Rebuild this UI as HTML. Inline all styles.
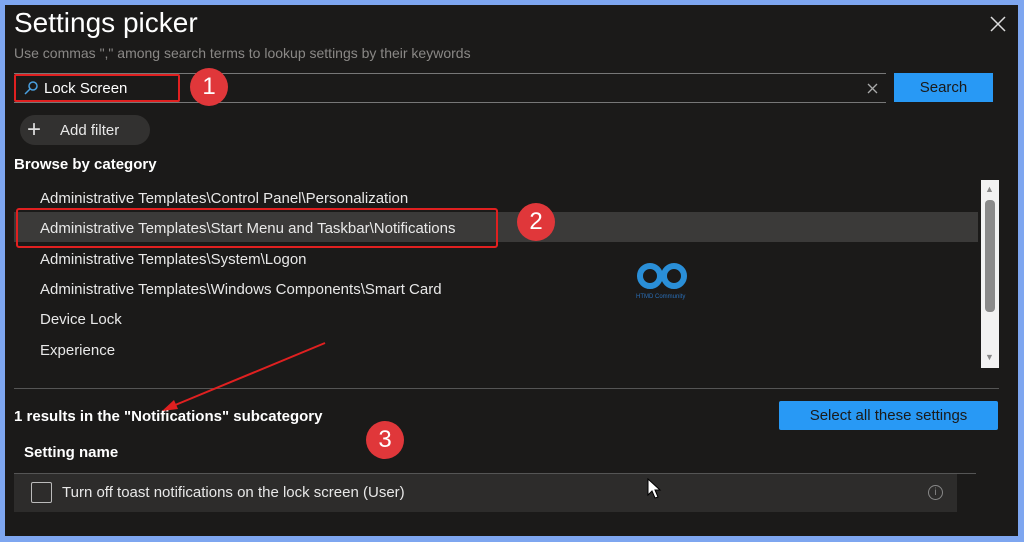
<!DOCTYPE html><html><head><style>
body{margin:0;width:1024px;height:542px;background:#7ea6f0;position:relative;overflow:hidden;font-family:"Liberation Sans",sans-serif;color:#fff}
.p{position:absolute;left:5px;top:5px;width:1013px;height:531px;background:#1b1a19}
.a{position:absolute;white-space:nowrap}
.it{font-size:15px;color:#e8e8e8}
.c{position:absolute;width:38px;height:38px;border-radius:50%;background:#e0373a;color:#fff;font-size:24px;text-align:center;line-height:38px}
</style></head><body><div class="p"></div>
<div class="a" style="left:14px;top:7px;font-size:28px">Settings picker</div>
<div class="a" style="left:14px;top:45px;font-size:14px;color:#8a8886">Use commas "," among search terms to lookup settings by their keywords</div>
<svg class="a" style="left:990px;top:16px" width="16" height="16"><path d="M1 1L15 15M15 1L1 15" stroke="#ddd" stroke-width="1.5"/></svg>
<div class="a" style="left:14px;top:73px;width:872px;height:28px;border-top:1px solid #777;border-bottom:1px solid #777"></div>
<div class="a" style="left:14px;top:74px;width:162px;height:24px;border:2px solid #e02020;border-radius:2px"></div>
<svg class="a" style="left:24px;top:81px" width="14" height="14"><circle cx="9" cy="5" r="4" stroke="#4aa0e0" stroke-width="1.5" fill="none"/><line x1="6" y1="8" x2="1" y2="13" stroke="#4aa0e0" stroke-width="1.5"/></svg>
<div class="a it" style="left:44px;top:80px;color:#fff">Lock Screen</div>
<svg class="a" style="left:867px;top:83px" width="11" height="11"><path d="M1 1L10 10M10 1L1 10" stroke="#aaa" stroke-width="1.3"/></svg>
<div class="c" style="left:190px;top:68px">1</div>
<div class="a" style="left:894px;top:73px;width:99px;height:29px;background:#2899f5;color:#1b1a19;font-size:15px;text-align:center;line-height:29px">Search</div>
<div class="a" style="left:20px;top:115px;width:130px;height:30px;border-radius:15px;background:#323130"></div>
<div class="a" style="left:27px;top:116px;font-size:24px;color:#ddd;font-weight:300">+</div>
<div class="a it" style="left:60px;top:122px">Add filter</div>
<div class="a" style="left:14px;top:156px;font-size:15px;font-weight:bold">Browse by category</div>
<div class="a" style="left:14px;top:212px;width:964px;height:30px;background:#3b3a39"></div>
<div class="a" style="left:16px;top:208px;width:478px;height:36px;border:2px solid #e02020;border-radius:3px"></div>
<div class="c" style="left:517px;top:203px">2</div>
<div class="a it" style="left:40px;top:190px">Administrative Templates\Control Panel\Personalization</div>
<div class="a it" style="left:40px;top:220px">Administrative Templates\Start Menu and Taskbar\Notifications</div>
<div class="a it" style="left:40px;top:251px">Administrative Templates\System\Logon</div>
<div class="a it" style="left:40px;top:281px">Administrative Templates\Windows Components\Smart Card</div>
<div class="a it" style="left:40px;top:311px">Device Lock</div>
<div class="a it" style="left:40px;top:342px">Experience</div>
<div class="a" style="left:981px;top:180px;width:18px;height:188px;background:#f2f2f2"></div>
<div class="a" style="left:985px;top:200px;width:10px;height:112px;background:#8a8a8a;border-radius:4px"></div>
<div class="a" style="left:985px;top:184px;font-size:9px;color:#888">▲</div>
<div class="a" style="left:985px;top:352px;font-size:9px;color:#888">▼</div>
<div class="a" style="left:636px;top:262px;width:52px;height:30px"><svg width="52" height="30"><circle cx="14" cy="14" r="10" stroke="#2a8fd8" stroke-width="6" fill="none"/><circle cx="38" cy="14" r="10" stroke="#2a8fd8" stroke-width="6" fill="none"/></svg></div>
<div class="a" style="left:636px;top:294px;font-size:6px;color:#2a6fb8">HTMD Community</div>
<div class="a" style="left:14px;top:388px;width:985px;height:1px;background:#555"></div>
<div class="a" style="left:14px;top:408px;font-size:15px;font-weight:bold">1 results in the "Notifications" subcategory</div>
<svg class="a" style="left:160px;top:340px" width="170" height="75"><line x1="165" y1="3" x2="8" y2="68" stroke="#e02020" stroke-width="2"/><polygon points="2,71 14,60 18,69" fill="#e02020"/></svg>
<div class="a" style="left:779px;top:401px;width:219px;height:29px;background:#2899f5;color:#1b1a19;font-size:15px;text-align:center;line-height:29px;border-radius:2px">Select all these settings</div>
<div class="c" style="left:366px;top:421px">3</div>
<div class="a" style="left:24px;top:444px;font-size:15px;font-weight:bold">Setting name</div>
<div class="a" style="left:14px;top:473px;width:962px;height:1px;background:#555"></div>
<div class="a" style="left:14px;top:474px;width:943px;height:38px;background:#2d2c2b"></div>
<div class="a" style="left:31px;top:482px;width:19px;height:19px;border:1px solid #bbb;border-radius:2px"></div>
<div class="a it" style="left:62px;top:484px">Turn off toast notifications on the lock screen (User)</div>
<div class="a" style="left:928px;top:485px;width:13px;height:13px;border:1px solid #888;border-radius:50%;font-size:10px;color:#888;text-align:center;line-height:13px">i</div>
<svg class="a" style="left:647px;top:478px" width="16" height="22"><polygon points="1,1 1,17 5,13 8,20 11,19 8,12 13,12" fill="#fff" stroke="#000"/></svg>
</body></html>
